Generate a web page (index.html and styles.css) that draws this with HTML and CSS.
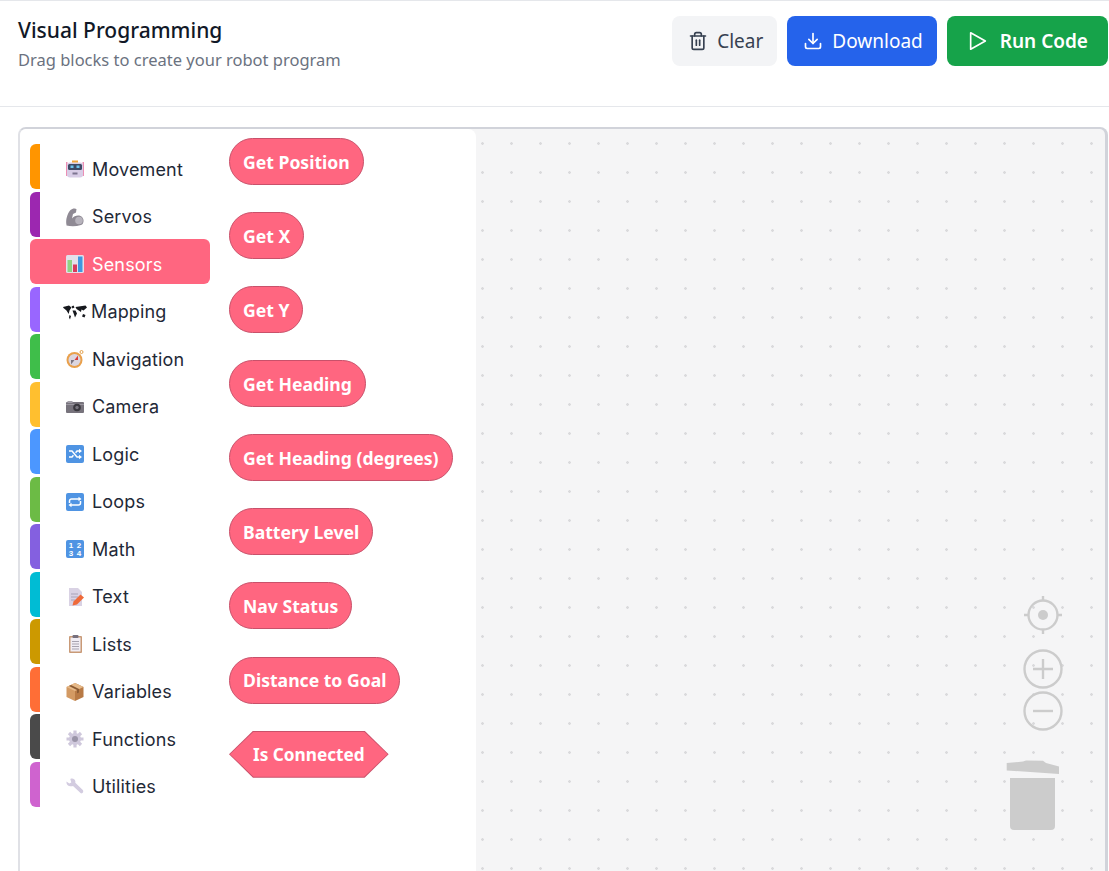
FILE: index.html
```html
<!DOCTYPE html>
<html lang="en">
<head>
<meta charset="utf-8">
<title>Visual Programming</title>
<link rel="stylesheet" href="styles.css">
</head>
<body>
<header class="topbar">
  <div class="heading">
    <h1 class="title">Visual Programming</h1>
    <p class="subtitle">Drag blocks to create your robot program</p>
  </div>
  <div class="actions">
    <button class="btn btn-clear">
      <svg class="btn-icon" viewBox="0 0 24 24" fill="none" stroke="currentColor" stroke-width="2" stroke-linecap="round" stroke-linejoin="round"><path d="M3 6h18"/><path d="M19 6v14a2 2 0 0 1-2 2H7a2 2 0 0 1-2-2V6"/><path d="M8 6V4a2 2 0 0 1 2-2h4a2 2 0 0 1 2 2v2"/><path d="M10 11v6"/><path d="M14 11v6"/></svg>
      Clear
    </button>
    <button class="btn btn-download">
      <svg class="btn-icon" viewBox="0 0 24 24" fill="none" stroke="currentColor" stroke-width="2" stroke-linecap="round" stroke-linejoin="round"><path d="M21 15v4a2 2 0 0 1-2 2H5a2 2 0 0 1-2-2v-4"/><path d="M7 10l5 5 5-5"/><path d="M12 15V3"/></svg>
      Download
    </button>
    <button class="btn btn-run">
      <svg class="btn-icon btn-icon-play" viewBox="0 0 24 24" fill="none" stroke="currentColor" stroke-width="1.8" stroke-linecap="round" stroke-linejoin="round"><path d="M4 3l16 9-16 9V3z"/></svg>
      Run Code
    </button>
  </div>
</header>

<main class="content">
  <section class="workspace">
    <div class="panel">
      <nav class="toolbox">
        <div class="cat cat-movement">
          <svg class="emoji" viewBox="0 0 18 18"><path d="M0 2h1.500v14H0zM16.500 2H18v14h-1.500z" fill="#ec8fb4"/><rect x="1" y="2.500" width="16" height="15" rx="3" fill="#d8cde6"/><rect x="2" y="4" width="14" height="6" rx="1.500" fill="#3d4a66"/><rect x="4.500" y="5.500" width="3" height="2.500" fill="#6cc3ee"/><rect x="10.500" y="5.500" width="3" height="2.500" fill="#6cc3ee"/><rect x="6" y="0.500" width="6" height="2" fill="#f0a63c"/><rect x="6.500" y="12.500" width="5" height="2" fill="#7d7590"/></svg>
          <span>Movement</span>
        </div>
        <div class="cat cat-servos">
          <svg class="emoji" viewBox="0 0 18 18"><path d="M0.500 17C-.5 12 1 6 4.500 2 6 .5 9 0 10.500 1l-.5 3.500-3 1.500-1 4.500c2-2.500 5.500-3.500 8.500-2.500 4 1.500 4 8 .5 9-5 1.500-10 1.500-14.500 .5z" fill="#8f8a94"/><circle cx="13" cy="12.500" r="3.800" fill="#b7b3bc"/></svg>
          <span>Servos</span>
        </div>
        <div class="cat cat-sensors active">
          <svg class="emoji" viewBox="0 0 18 18"><rect x="0" y="0" width="18" height="18" rx="1.500" fill="#e3e0ea"/><rect x="1.500" y="5" width="4.500" height="12" fill="#8fd283"/><rect x="7" y="9.500" width="4" height="7.500" fill="#d83a5c"/><rect x="12" y="1.500" width="4.500" height="15.500" fill="#3f97e0"/></svg>
          <span>Sensors</span>
        </div>
        <div class="cat cat-mapping">
          <svg class="emoji emoji-wide" viewBox="0 0 24 18"><path d="M0 4l6-1.500 2.500 2-2 3-.8 3.500-2.200-3.500-3-2.500zM8.500 3.500l2-1 1 2-2 1zM12.500 4l10-1.500 1.500 2-3.500 3-2-1-.5 2.500-3-2-1.500-1zM9.500 7.500l3 0 1.500 3-2 4-1-3zM6.500 12l1.500 1-1 3.500-1-2zM20 11l2.500 1-1 2.500-2.500-1z" fill="#16181d"/></svg>
          <span>Mapping</span>
        </div>
        <div class="cat cat-navigation">
          <svg class="emoji" viewBox="0 0 18 18"><circle cx="15.500" cy="2" r="1.500" fill="none" stroke="#e2a04a"/><circle cx="8.500" cy="10" r="8" fill="#e9a04b"/><circle cx="8.500" cy="10" r="6" fill="#dcd6e0"/><path d="M12 5.500l-3.500 4.500 3.500 0z" fill="#d83a3a"/><path d="M5 14.500l3.500-4.500-3.500 0z" fill="#7a7480"/></svg>
          <span>Navigation</span>
        </div>
        <div class="cat cat-camera">
          <svg class="emoji" viewBox="0 0 18 18"><rect x="0" y="4" width="18" height="11" rx="1" fill="#77737c"/><rect x="1.500" y="3" width="5" height="2" fill="#a29ea7"/><rect x="0" y="6" width="18" height="1" fill="#9b97a0"/><circle cx="11" cy="9.500" r="3.800" fill="#3a383e"/><circle cx="11" cy="9.500" r="1.700" fill="#77747d"/></svg>
          <span>Camera</span>
        </div>
        <div class="cat cat-logic">
          <svg class="emoji" viewBox="0 0 18 18"><rect x="0" y="0" width="18" height="18" rx="2" fill="#4f94e3"/><path d="M3 6h3l5 6h3M3 12h3l1.400-1.700M9.600 7.700L11 6h3" fill="none" stroke="#fff" stroke-width="1.500"/><path d="M13 3.800l3 2.200-3 2.200zM13 9.800l3 2.200-3 2.200z" fill="#fff"/></svg>
          <span>Logic</span>
        </div>
        <div class="cat cat-loops">
          <svg class="emoji" viewBox="0 0 18 18"><rect x="0" y="0" width="18" height="18" rx="2" fill="#4f94e3"/><path d="M3.500 10V8a2 2 0 0 1 2-2h8M14.500 8v2a2 2 0 0 1-2 2h-8" fill="none" stroke="#fff" stroke-width="1.500"/><path d="M12.500 3.800l3 2.200-3 2.200zM5.500 9.800l-3 2.200 3 2.200z" fill="#fff"/></svg>
          <span>Loops</span>
        </div>
        <div class="cat cat-math">
          <svg class="emoji" viewBox="0 0 18 18"><rect x="0" y="0" width="18" height="18" rx="2" fill="#4f94e3"/><text class="emoji-digits" x="5" y="8" text-anchor="middle">1</text><text class="emoji-digits" x="13" y="8" text-anchor="middle">2</text><text class="emoji-digits" x="5" y="16" text-anchor="middle">3</text><text class="emoji-digits" x="13" y="16" text-anchor="middle">4</text></svg>
          <span>Math</span>
        </div>
        <div class="cat cat-text">
          <svg class="emoji" viewBox="0 0 18 18"><path d="M3 0h9l4 4v14H3z" fill="#d9d2e4"/><path d="M5 6h7M5 9h7M5 12h4" stroke="#a9a2b8" stroke-width="1"/><path d="M6.500 17.500l1-4 7-7 3.500 3-7 7z" fill="#ef6a3a"/></svg>
          <span>Text</span>
        </div>
        <div class="cat cat-lists">
          <svg class="emoji" viewBox="0 0 18 18"><rect x="3" y="1" width="13" height="17" rx="1" fill="#c99a77"/><rect x="4.500" y="2.500" width="10" height="14" fill="#f1edf4"/><rect x="6.500" y="0" width="6" height="3" rx="1" fill="#77717f"/><path d="M6 6.500h7M6 9h7M6 11.500h7M6 14h7" stroke="#a8a3b0" stroke-width="1"/></svg>
          <span>Lists</span>
        </div>
        <div class="cat cat-variables">
          <svg class="emoji" viewBox="0 0 18 18"><path d="M9 0l8.500 4v10L9 18z" fill="#b87a45"/><path d="M9 0L.5 4v10L9 18z" fill="#d39a63"/><path d="M.5 4L9 8l8.500-4L9 0z" fill="#e6b988"/><path d="M5 2l8 4v3.500l-2 .8V7L3 3z" fill="#8a5a32"/></svg>
          <span>Variables</span>
        </div>
        <div class="cat cat-functions">
          <svg class="emoji" viewBox="0 0 18 18"><path d="M9 .5v17M.5 9h17M3 3l12 12M15 3L3 15" stroke="#cfc8dc" stroke-width="3.200"/><circle cx="9" cy="9" r="6" fill="#cfc8dc"/><circle cx="9" cy="9" r="3" fill="#9a94a8"/></svg>
          <span>Functions</span>
        </div>
        <div class="cat cat-utilities">
          <svg class="emoji" viewBox="0 0 18 18"><path d="M.5 3.500l2.800 2 2-1-1-3.500c2.200-1 4.500 0 5 2 .2 1 0 1.700 0 1.700l7.500 7.300c1.200 1.300 0 4-2 3.300L7 8c-2.500 1-7 0-6.500-4.500z" fill="#d3cce0"/></svg>
          <span>Utilities</span>
        </div>
      </nav>
      <div class="flyout">
        <div class="block">Get Position</div>
        <div class="block">Get X</div>
        <div class="block">Get Y</div>
        <div class="block">Get Heading</div>
        <div class="block">Get Heading (degrees)</div>
        <div class="block">Battery Level</div>
        <div class="block">Nav Status</div>
        <div class="block">Distance to Goal</div>
        <div class="hex-border"><div class="hex-fill">Is Connected</div></div>
      </div>
    </div>
    <div class="controls">
      <svg class="control-center" viewBox="0 0 40 40" fill="none" stroke="#ccc" stroke-width="2.400"><circle cx="20" cy="20" r="14.500"/><circle cx="20" cy="20" r="5" fill="#ccc" stroke="none"/><path d="M20 1v5M20 34v5M1 20h5M34 20h5"/></svg>
      <svg class="control-zoom control-plus" viewBox="0 0 40 40" fill="none" stroke="#ccc" stroke-width="2.400"><circle cx="20" cy="20" r="18.500"/><path d="M20 10v20M10 20h20"/></svg>
      <svg class="control-zoom" viewBox="0 0 40 40" fill="none" stroke="#ccc" stroke-width="2.400"><circle cx="20" cy="20" r="18.500"/><path d="M10 20h20"/></svg>
      <svg class="control-trash" viewBox="0 0 54 72" fill="#ccc"><path d="M.7 3L17 1.500 20 .5 37 .7 40 3 53 6.500 53 14 .7 10.500z"/><path d="M4 18h45v48a4 4 0 0 1-4 4H8a4 4 0 0 1-4-4z"/></svg>
    </div>
  </section>
</main>
</body>
</html>
```
FILE: styles.css
```css
* { box-sizing: border-box; }

html, body {
  margin: 0;
  height: 100%;
  overflow: hidden;
  background: #fff;
}

body {
  font-family: "Noto Sans", "Open Sans", sans-serif;
  color: #111827;
}

.topbar {
  display: flex;
  justify-content: space-between;
  align-items: flex-start;
  height: 107px;
  padding: 15px 1px 0 18px;
  border-top: 1px solid #e5e7eb;
  border-bottom: 1px solid #e5e7eb;
}

.title {
  margin: 0;
  font-size: 21px;
  font-weight: 550;
  line-height: 28px;
  color: #111827;
}

.subtitle {
  margin: 4px 0 0;
  font-size: 16.500px;
  line-height: 24px;
  color: #6b7280;
}

.actions {
  display: flex;
  gap: 10px;
}

.btn {
  display: flex;
  align-items: center;
  gap: 9px;
  height: 50px;
  padding: 0 14px 0 16px;
  border: 0;
  border-radius: 8px;
  font-family: inherit;
  font-size: 19px;
}

.btn-icon {
  width: 20px;
  height: 20px;
}

.btn-icon-play {
  width: 22px;
  height: 22px;
}

.btn-clear { background: #f3f4f6; color: #374151; }
.btn-download { background: #2563eb; color: #fff; }
.btn-run {
  gap: 11px;
  padding: 0 20px 0 20px;
  background: #16a34a;
  color: #fff;
  font-weight: 600;
}

.content {
  padding: 20px 1px 0 18px;
}

.workspace {
  position: relative;
  display: flex;
  height: 800px;
  border: 2px solid #e0e1e6;
  border-top-color: #d1d3da;
  border-right: 3px solid #d1d3da;
  border-radius: 8px;
  background-color: #f5f5f6;
  background-image: radial-gradient(circle at 1.500px 1.500px, #dadadc 1px, transparent 1.600px);
  background-size: 29px 29px;
  background-position: 26px 13px;
  overflow: hidden;
}

.panel {
  display: flex;
  width: 456px;
  background: #fff;
  border-top-right-radius: 8px;
}

.toolbox {
  display: flex;
  flex-direction: column;
  gap: 2.500px;
  width: 190px;
  padding: 15px 0 0 10px;
}

.cat {
  display: flex;
  flex-shrink: 0;
  align-items: center;
  gap: 8px;
  height: 45px;
  padding: 5px 0 0 26px;
  border-left: 10px solid var(--cat);
  border-radius: 6px 0 0 6px;
  font-family: "Inter", "Lato", sans-serif;
  font-size: 18px;
  letter-spacing: 0.150px;
  color: #1f2937;
}

.cat-movement { --cat: #ff9500; }
.cat-servos { --cat: #9c27b0; }
.cat-sensors { --cat: #ff6680; }
.cat-mapping { --cat: #9966ff; }
.cat-navigation { --cat: #3fbe4a; }
.cat-camera { --cat: #ffbf2f; }
.cat-logic { --cat: #4c97ff; }
.cat-loops { --cat: #6cbb45; }
.cat-math { --cat: #8460e0; }
.cat-text { --cat: #00bcd4; }
.cat-lists { --cat: #cc9900; }
.cat-variables { --cat: #ff6e36; }
.cat-functions { --cat: #4a4a4a; }
.cat-utilities { --cat: #cf63cf; }

.cat.active {
  background: #ff6680;
  border-radius: 6px;
  color: #fff;
}

.emoji {
  flex-shrink: 0;
  width: 18px;
  height: 18px;
  overflow: visible;
}

.emoji-wide {
  width: 24px;
  margin-left: -3px;
  margin-right: -4px;
}

.emoji-digits {
  font-family: "Liberation Sans", sans-serif;
  font-size: 8px;
  font-weight: 700;
  fill: #fff;
}

.flyout {
  display: flex;
  flex-direction: column;
  align-items: flex-start;
  gap: 27.080px;
  padding: 9px 0 0 19px;
}

.block {
  display: flex;
  align-items: center;
  height: 47px;
  padding: 0 13px;
  background: #ff6680;
  border: 1px solid #c9516a;
  border-radius: 24px;
  font-size: 17.600px;
  font-weight: 700;
  color: #fff;
  white-space: nowrap;
}

.hex-border {
  padding: 1px;
  background: #c9516a;
  clip-path: polygon(24px 0, calc(100% - 24px) 0, 100% 50%, calc(100% - 24px) 100%, 24px 100%, 0 50%);
}

.hex-fill {
  display: flex;
  align-items: center;
  height: 45px;
  padding: 0 23px;
  background: #ff6680;
  clip-path: polygon(23.500px 0, calc(100% - 23.500px) 0, 100% 50%, calc(100% - 23.500px) 100%, 23.500px 100%, 0 50%);
  font-size: 17.200px;
  font-weight: 700;
  color: #fff;
  white-space: nowrap;
}

.controls {
  position: absolute;
  top: 466px;
  left: 986px;
  display: flex;
  flex-direction: column;
  align-items: center;
  width: 74px;
}

.control-center {
  width: 40px;
  height: 40px;
}

.control-zoom {
  width: 40px;
  height: 40px;
  margin-top: 2px;
}

.control-plus {
  margin-top: 14px;
}

.control-trash {
  align-self: flex-start;
  width: 54px;
  height: 72px;
  margin-top: 29px;
}
```
